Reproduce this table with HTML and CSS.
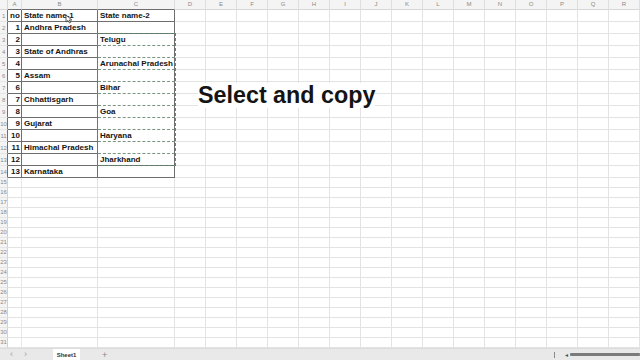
FILE: index.html
```html
<!DOCTYPE html>
<html>
<head>
<meta charset="utf-8">
<link rel="stylesheet" href="styles.css">
</head>
<body>
<div class="app">
  <div class="grid">
    <div class="r hdr"><i class="corner"></i><b class="ch k">A</b><b class="ch k">B</b><b class="ch k">C</b><b class="ch">D</b><b class="ch">E</b><b class="ch">F</b><b class="ch">G</b><b class="ch">H</b><b class="ch">I</b><b class="ch">J</b><b class="ch">K</b><b class="ch">L</b><b class="ch">M</b><b class="ch">N</b><b class="ch">O</b><b class="ch">P</b><b class="ch">Q</b><b class="ch">R</b></div>
    <div class="r t"><i class="rh k">1</i><span class="d">no</span><span class="d">State name-1</span><span class="d">State name-2</span><s></s><s></s><s></s><s></s><s></s><s></s><s></s><s></s><s></s><s></s><s></s><s></s><s></s><s></s><s></s></div>
    <div class="r t"><i class="rh k">2</i><span class="d n">1</span><span class="d">Andhra Pradesh</span><span class="d"></span><s></s><s></s><s></s><s></s><s></s><s></s><s></s><s></s><s></s><s></s><s></s><s></s><s></s><s></s><s></s></div>
    <div class="r t"><i class="rh k">3</i><span class="d n">2</span><span class="d"></span><span class="d m">Telugu</span><s></s><s></s><s></s><s></s><s></s><s></s><s></s><s></s><s></s><s></s><s></s><s></s><s></s><s></s><s></s></div>
    <div class="r t"><i class="rh k">4</i><span class="d n">3</span><span class="d">State of Andhras</span><span class="d m"></span><s></s><s></s><s></s><s></s><s></s><s></s><s></s><s></s><s></s><s></s><s></s><s></s><s></s><s></s><s></s></div>
    <div class="r t"><i class="rh k">5</i><span class="d n">4</span><span class="d"></span><span class="d m">Arunachal Pradesh</span><s></s><s></s><s></s><s></s><s></s><s></s><s></s><s></s><s></s><s></s><s></s><s></s><s></s><s></s><s></s></div>
    <div class="r t"><i class="rh k">6</i><span class="d n">5</span><span class="d">Assam</span><span class="d m"></span><s></s><s></s><s></s><s></s><s></s><s></s><s></s><s></s><s></s><s></s><s></s><s></s><s></s><s></s><s></s></div>
    <div class="r t"><i class="rh k">7</i><span class="d n">6</span><span class="d"></span><span class="d m">Bihar</span><s></s><s></s><s></s><s></s><s></s><s></s><s></s><s></s><s></s><s></s><s></s><s></s><s></s><s></s><s></s></div>
    <div class="r t"><i class="rh k">8</i><span class="d n">7</span><span class="d">Chhattisgarh</span><span class="d m"></span><s></s><s></s><s></s><s></s><s></s><s></s><s></s><s></s><s></s><s></s><s></s><s></s><s></s><s></s><s></s></div>
    <div class="r t"><i class="rh k">9</i><span class="d n">8</span><span class="d"></span><span class="d m">Goa</span><s></s><s></s><s></s><s></s><s></s><s></s><s></s><s></s><s></s><s></s><s></s><s></s><s></s><s></s><s></s></div>
    <div class="r t"><i class="rh k">10</i><span class="d n">9</span><span class="d">Gujarat</span><span class="d m"></span><s></s><s></s><s></s><s></s><s></s><s></s><s></s><s></s><s></s><s></s><s></s><s></s><s></s><s></s><s></s></div>
    <div class="r t"><i class="rh k">11</i><span class="d n">10</span><span class="d"></span><span class="d m">Haryana</span><s></s><s></s><s></s><s></s><s></s><s></s><s></s><s></s><s></s><s></s><s></s><s></s><s></s><s></s><s></s></div>
    <div class="r t"><i class="rh k">12</i><span class="d n">11</span><span class="d">Himachal Pradesh</span><span class="d m"></span><s></s><s></s><s></s><s></s><s></s><s></s><s></s><s></s><s></s><s></s><s></s><s></s><s></s><s></s><s></s></div>
    <div class="r t"><i class="rh k">13</i><span class="d n">12</span><span class="d"></span><span class="d">Jharkhand</span><s></s><s></s><s></s><s></s><s></s><s></s><s></s><s></s><s></s><s></s><s></s><s></s><s></s><s></s><s></s></div>
    <div class="r t"><i class="rh k">14</i><span class="d n">13</span><span class="d">Karnataka</span><span class="d"></span><s></s><s></s><s></s><s></s><s></s><s></s><s></s><s></s><s></s><s></s><s></s><s></s><s></s><s></s><s></s></div>
    <div class="r"><i class="rh">15</i><s class="a"></s><s></s><s></s><s></s><s></s><s></s><s></s><s></s><s></s><s></s><s></s><s></s><s></s><s></s><s></s><s></s><s></s><s></s></div>
    <div class="r"><i class="rh">16</i><s class="a"></s><s></s><s></s><s></s><s></s><s></s><s></s><s></s><s></s><s></s><s></s><s></s><s></s><s></s><s></s><s></s><s></s><s></s></div>
    <div class="r"><i class="rh">17</i><s class="a"></s><s></s><s></s><s></s><s></s><s></s><s></s><s></s><s></s><s></s><s></s><s></s><s></s><s></s><s></s><s></s><s></s><s></s></div>
    <div class="r"><i class="rh">18</i><s class="a"></s><s></s><s></s><s></s><s></s><s></s><s></s><s></s><s></s><s></s><s></s><s></s><s></s><s></s><s></s><s></s><s></s><s></s></div>
    <div class="r"><i class="rh">19</i><s class="a"></s><s></s><s></s><s></s><s></s><s></s><s></s><s></s><s></s><s></s><s></s><s></s><s></s><s></s><s></s><s></s><s></s><s></s></div>
    <div class="r"><i class="rh">20</i><s class="a"></s><s></s><s></s><s></s><s></s><s></s><s></s><s></s><s></s><s></s><s></s><s></s><s></s><s></s><s></s><s></s><s></s><s></s></div>
    <div class="r"><i class="rh">21</i><s class="a"></s><s></s><s></s><s></s><s></s><s></s><s></s><s></s><s></s><s></s><s></s><s></s><s></s><s></s><s></s><s></s><s></s><s></s></div>
    <div class="r"><i class="rh">22</i><s class="a"></s><s></s><s></s><s></s><s></s><s></s><s></s><s></s><s></s><s></s><s></s><s></s><s></s><s></s><s></s><s></s><s></s><s></s></div>
    <div class="r"><i class="rh">23</i><s class="a"></s><s></s><s></s><s></s><s></s><s></s><s></s><s></s><s></s><s></s><s></s><s></s><s></s><s></s><s></s><s></s><s></s><s></s></div>
    <div class="r"><i class="rh">24</i><s class="a"></s><s></s><s></s><s></s><s></s><s></s><s></s><s></s><s></s><s></s><s></s><s></s><s></s><s></s><s></s><s></s><s></s><s></s></div>
    <div class="r"><i class="rh">25</i><s class="a"></s><s></s><s></s><s></s><s></s><s></s><s></s><s></s><s></s><s></s><s></s><s></s><s></s><s></s><s></s><s></s><s></s><s></s></div>
    <div class="r"><i class="rh">26</i><s class="a"></s><s></s><s></s><s></s><s></s><s></s><s></s><s></s><s></s><s></s><s></s><s></s><s></s><s></s><s></s><s></s><s></s><s></s></div>
    <div class="r"><i class="rh">27</i><s class="a"></s><s></s><s></s><s></s><s></s><s></s><s></s><s></s><s></s><s></s><s></s><s></s><s></s><s></s><s></s><s></s><s></s><s></s></div>
    <div class="r"><i class="rh">28</i><s class="a"></s><s></s><s></s><s></s><s></s><s></s><s></s><s></s><s></s><s></s><s></s><s></s><s></s><s></s><s></s><s></s><s></s><s></s></div>
    <div class="r"><i class="rh">29</i><s class="a"></s><s></s><s></s><s></s><s></s><s></s><s></s><s></s><s></s><s></s><s></s><s></s><s></s><s></s><s></s><s></s><s></s><s></s></div>
    <div class="r"><i class="rh">30</i><s class="a"></s><s></s><s></s><s></s><s></s><s></s><s></s><s></s><s></s><s></s><s></s><s></s><s></s><s></s><s></s><s></s><s></s><s></s></div>
    <div class="r"><i class="rh">31</i><s class="a"></s><s></s><s></s><s></s><s></s><s></s><s></s><s></s><s></s><s></s><s></s><s></s><s></s><s></s><s></s><s></s><s></s><s></s></div>

    <div class="marquee"></div>
    <div class="title">Select and copy</div>
    <svg class="cursor" width="8" height="10" viewBox="0 0 8 10"><path d="M1 1 L1 8 L3 6.5 L4.5 9 L5.6 8.4 L4.3 6 L6.8 6 Z" fill="#fff" stroke="#333" stroke-width="0.8" stroke-linejoin="round"/></svg>
  </div>
  <div class="tabbar">
    <div class="nav"><span>‹</span><span>›</span></div>
    <div class="tab">Sheet1</div>
    <div class="plus">+</div>
    <div class="spacer"></div>
    <div class="split"></div>
    <div class="left">◂</div>
    <div class="thumb"></div>
  </div>
</div>
</body>
</html>
```
FILE: styles.css
```css
* { box-sizing: border-box; margin: 0; padding: 0; }
html, body { width: 640px; height: 360px; overflow: hidden; background: #fff; }
body { font-family: "Liberation Sans", Arial, sans-serif; }
.app { display: flex; flex-direction: column; width: 640px; height: 360px; }
.grid { position: relative; flex: 0 0 348px; overflow: hidden; }
.r {
  display: grid;
  grid-template-columns: 8px 14px 76px 77px repeat(15, 31px);
  height: 10px;
}
.r.t { height: 12px; }
.r > * { display: block; text-decoration: none; font-style: normal; border-right: 1px solid #e3e3e3; border-bottom: 1px solid #e3e3e3; overflow: hidden; white-space: nowrap; }
.hdr { height: 10px; background: #f4f4f4; }
.corner { background: #f4f4f4; border-right: 1px solid #d6d6d6 !important; border-bottom: 1px solid #d6d6d6 !important; }
.ch { font-weight: normal; font-size: 6px; line-height: 9px; color: #8a8a8a; text-align: center; border-right-color: #dedede !important; border-bottom: 1px solid #d6d6d6 !important; }
.ch.k { border-bottom-color: #6e6e6e !important; }
.rh { background: #f4f4f4; font-size: 6px; line-height: 9px; color: #8a8a8a; text-align: center; border-right: 1px solid #d2d2d2 !important; border-bottom-color: #e6e6e6 !important; letter-spacing: -0.2px; }
.rh.k { line-height: 12px; border-right-color: #6e6e6e !important; }
.d {
  font-size: 8px; font-weight: bold; color: #141414;
  line-height: 11px; padding-left: 2px;
  border-right: 1px solid #6e6e6e !important;
  border-bottom: 1px solid #6e6e6e !important;
}
.d.n { text-align: right; padding: 0 1px 0 0; }
.d.m { border-bottom: 1px dashed #7a9482 !important; }
.a { border-right-color: #e8e8e8 !important; }
.marquee {
  position: absolute; left: 97px; top: 33px; width: 79px; height: 133px;
  border: 1px dashed #5d8a6b;
  pointer-events: none;
}
.title {
  position: absolute; left: 198px; top: 83px;
  font-family: "Liberation Sans", Arial, sans-serif;
  font-weight: bold; font-size: 23.3px; line-height: 1; color: #141414;
  background: #fff; padding: 1px 0;
}
.cursor { position: absolute; left: 65px; top: 14px; }
.tabbar {
  flex: 1; display: flex; align-items: center;
  background: #e9e9e9; border-top: 1px solid #dcdcdc;
  font-size: 6px; color: #9a9a9a;
}
.nav { display: flex; gap: 11px; padding-left: 10px; width: 53px; font-size: 9px; line-height: 11px; color: #a0a0a0; }
.tab { background: #fff; height: 100%; width: 27px; display: flex; align-items: center; justify-content: center; font-weight: bold; color: #333; font-size: 6px; }
.plus { margin-left: 22px; font-size: 9px; color: #888; line-height: 10px; }
.spacer { flex: 1; }
.split { width: 1px; height: 6px; background: #8a8a8a; margin-right: 10px; }
.left { font-size: 6px; color: #555; margin-right: 2px; }
.thumb { width: 70px; height: 3px; background: #7b7b7b; border-radius: 1px; }
```
